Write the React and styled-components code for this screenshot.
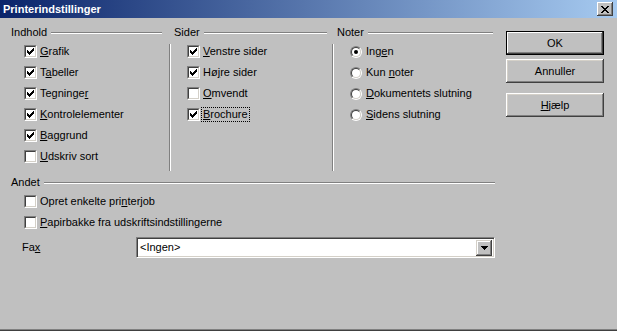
import React from 'react';
import styled, { createGlobalStyle } from 'styled-components';

const GlobalStyle = createGlobalStyle`
  html, body {
    margin: 0;
    padding: 0;
    background: #c0c0c0;
  }
  body {
    font-family: "Liberation Sans", Arial, sans-serif;
    font-size: 11px;
    color: #000;
  }
`;

const Window = styled.div`
  width: 617px;
  height: 331px;
  display: flex;
  flex-direction: column;
  background: #c0c0c0;
  box-shadow: inset 0 -1px #404040, inset 0 -2px #808080;
  overflow: hidden;
`;

const TitleBar = styled.div`
  height: 18px;
  flex: none;
  display: flex;
  align-items: center;
  justify-content: space-between;
  padding: 0 4px 0 3px;
  background: linear-gradient(to right, #0a246a, #a6caf0);
`;

const Title = styled.span`
  color: #fff;
  font-weight: bold;
  font-size: 11px;
  line-height: 18px;
`;

const CloseButton = styled.div`
  width: 16px;
  height: 14px;
  box-sizing: border-box;
  display: flex;
  align-items: center;
  justify-content: center;
  background: #c0c0c0;
  box-shadow: inset -1px -1px #404040, inset 1px 1px #fff, inset -2px -2px #808080;
`;

const Body = styled.div`
  flex: 1;
  display: flex;
`;

const LeftPane = styled.div`
  width: 495px;
  box-sizing: border-box;
  padding: 8px 0 0 11px;
  display: flex;
  flex-direction: column;
`;

const RightPane = styled.div`
  margin-left: 11px;
  padding-top: 13px;
  display: flex;
  flex-direction: column;
`;

const TopRow = styled.div`
  display: flex;
  align-items: flex-start;
`;

const Column = styled.div`
  width: ${p => p.$w}px;
  display: flex;
  flex-direction: column;
`;

const GroupHeader = styled.div`
  height: 13px;
  display: flex;
  align-items: center;
  padding-left: ${p => p.$pl || 0}px;
  margin-right: ${p => p.$mr || 0}px;
  line-height: 13px;
`;

// etched line after a group title
const Etch = styled.div`
  flex: 1;
  height: 0;
  margin-left: 4px;
  border-top: 1px solid #808080;
  border-bottom: 1px solid #fff;
`;

const VSep = styled.div`
  width: 0;
  height: 127px;
  margin-top: 18px;
  flex: none;
  border-left: 1px solid #808080;
  border-right: 1px solid #fff;
`;

const Items = styled.div`
  display: flex;
  flex-direction: column;
  margin-top: 2px;
  padding-left: ${p => p.$pl}px;
`;

const Row = styled.div`
  height: 21px;
  display: flex;
  align-items: center;
  gap: 3px;
  line-height: 13px;
  white-space: nowrap;
`;

const Box = styled.span`
  width: 13px;
  height: 13px;
  box-sizing: border-box;
  flex: none;
  border: 1px solid;
  border-color: #808080 #fff #fff #808080;
  display: flex;
`;

const BoxInner = styled.span`
  flex: 1;
  border: 1px solid;
  border-color: #404040 #d4d0c8 #d4d0c8 #404040;
  background: #fff;
  display: flex;
  align-items: center;
  justify-content: center;
`;

const Ring = styled.span`
  width: 12px;
  height: 12px;
  box-sizing: border-box;
  flex: none;
  border-radius: 50%;
  border: 1px solid;
  border-color: #808080 #fff #fff #808080;
  display: flex;
  margin-right: 1px;
`;

const RingInner = styled.span`
  flex: 1;
  border-radius: 50%;
  border: 1px solid;
  border-color: #404040 #d4d0c8 #d4d0c8 #404040;
  background: #fff;
  display: flex;
  align-items: center;
  justify-content: center;
`;

const Dot = styled.span`
  width: 4px;
  height: 4px;
  border-radius: 50%;
  background: #000;
`;

const Label = styled.span`
  padding: 0 1px;
  border: 1px ${p => (p.$focus ? 'dotted #000' : 'solid transparent')};
  margin-left: -2px;
`;

const Key = styled.span`
  text-decoration: underline;
  text-underline-offset: 1px;
`;

const Section = styled.div`
  margin-top: 5px;
  display: flex;
  flex-direction: column;
`;

const FaxRow = styled.div`
  margin-top: 4px;
  display: flex;
  align-items: center;
  height: 21px;
`;

const FaxLabel = styled.span`
  width: 114px;
  padding-left: 11px;
  line-height: 13px;
`;

const Combo = styled.div`
  flex: 1;
  height: 21px;
  box-sizing: border-box;
  display: flex;
  align-items: center;
  background: #fff;
  border: 1px solid;
  border-color: #808080 #fff #fff #808080;
  box-shadow: inset 1px 1px #404040, inset -1px -1px #d4d0c8;
  padding: 0 2px 0 3px;
`;

const ComboText = styled.span`
  flex: 1;
  line-height: 13px;
`;

const DropButton = styled.div`
  width: 16px;
  height: 16px;
  box-sizing: border-box;
  display: flex;
  align-items: center;
  justify-content: center;
  background: #c0c0c0;
  box-shadow: inset -1px -1px #404040, inset 1px 1px #d4d0c8, inset -2px -2px #808080, inset 2px 2px #fff;
`;

const Button = styled.div`
  width: 98px;
  height: 24px;
  box-sizing: border-box;
  margin-top: ${p => p.$mt || 0}px;
  display: flex;
  align-items: center;
  justify-content: center;
  background: #c0c0c0;
  border: ${p => (p.$default ? '1px solid #000' : 'none')};
  box-shadow: ${p =>
    p.$default
      ? 'inset -1px -1px #404040, inset 1px 1px #fff, inset -2px -2px #808080'
      : 'inset -1px -1px #404040, inset 1px 1px #fff, inset -2px -2px #808080, inset 2px 2px #d4d0c8'};
`;

const CheckMark = () => (
  <svg width="7" height="7" viewBox="0 0 7 7" shapeRendering="crispEdges">
    {[2, 3, 4, 3, 2, 1, 0].map((y, x) => (
      <rect key={x} x={x} y={y} width="1" height="3" fill="#000" />
    ))}
  </svg>
);

const CloseGlyph = () => (
  <svg width="8" height="7" viewBox="0 0 8 7" shapeRendering="crispEdges">
    {[0, 1, 2, 3, 4, 5, 6].map(i => (
      <g key={i}>
        <rect x={i} y={i} width="2" height="1" fill="#000" />
        <rect x={6 - i} y={i} width="2" height="1" fill="#000" />
      </g>
    ))}
  </svg>
);

const Arrow = () => (
  <svg width="7" height="4" viewBox="0 0 7 4" shapeRendering="crispEdges">
    <rect x="0" y="0" width="7" height="1" fill="#000" />
    <rect x="1" y="1" width="5" height="1" fill="#000" />
    <rect x="2" y="2" width="3" height="1" fill="#000" />
    <rect x="3" y="3" width="1" height="1" fill="#000" />
  </svg>
);

const Check = ({ checked, focus, children }) => (
  <Row>
    <Box>
      <BoxInner>{checked && <CheckMark />}</BoxInner>
    </Box>
    <Label $focus={focus}>{children}</Label>
  </Row>
);

const Radio = ({ checked, children }) => (
  <Row>
    <Ring>
      <RingInner>{checked && <Dot />}</RingInner>
    </Ring>
    <Label>{children}</Label>
  </Row>
);

export default function App() {
  return (
    <Window>
      <GlobalStyle />
      <TitleBar>
        <Title>Printerindstillinger</Title>
        <CloseButton>
          <CloseGlyph />
        </CloseButton>
      </TitleBar>
      <Body>
        <LeftPane>
          <TopRow>
            <Column $w={158}>
              <GroupHeader $mr={7}>
                Indhold
                <Etch />
              </GroupHeader>
              <Items $pl={13}>
                <Check checked><Key>G</Key>rafik</Check>
                <Check checked>T<Key>a</Key>beller</Check>
                <Check checked>Tegninge<Key>r</Key></Check>
                <Check checked><Key>K</Key>ontrolelementer</Check>
                <Check checked><Key>B</Key>aggrund</Check>
                <Check><Key>U</Key>dskriv sort</Check>
              </Items>
            </Column>
            <VSep />
            <Column $w={161}>
              <GroupHeader $pl={3} $mr={5}>
                Sider
                <Etch />
              </GroupHeader>
              <Items $pl={16}>
                <Check checked><Key>V</Key>enstre sider</Check>
                <Check checked>Hø<Key>j</Key>re sider</Check>
                <Check><Key>O</Key>mvendt</Check>
                <Check checked focus><Key>B</Key>rochure</Check>
              </Items>
            </Column>
            <VSep />
            <Column $w={159}>
              <GroupHeader $pl={3}>
                Noter
                <Etch />
              </GroupHeader>
              <Items $pl={16}>
                <Radio checked>Ing<Key>e</Key>n</Radio>
                <Radio>Kun <Key>n</Key>oter</Radio>
                <Radio><Key>D</Key>okumentets slutning</Radio>
                <Radio><Key>S</Key>idens slutning</Radio>
              </Items>
            </Column>
          </TopRow>
          <Section>
            <GroupHeader>
              Andet
              <Etch />
            </GroupHeader>
            <Items $pl={13}>
              <Check>Opret enkelte pri<Key>n</Key>terjob</Check>
              <Check><Key>P</Key>apirbakke fra udskriftsindstillingerne</Check>
            </Items>
            <FaxRow>
              <FaxLabel>Fa<Key>x</Key></FaxLabel>
              <Combo>
                <ComboText>&lt;Ingen&gt;</ComboText>
                <DropButton>
                  <Arrow />
                </DropButton>
              </Combo>
            </FaxRow>
          </Section>
        </LeftPane>
        <RightPane>
          <Button $default>OK</Button>
          <Button $mt={4}>Annuller</Button>
          <Button $mt={10}><span><Key>H</Key>jælp</span></Button>
        </RightPane>
      </Body>
    </Window>
  );
}
